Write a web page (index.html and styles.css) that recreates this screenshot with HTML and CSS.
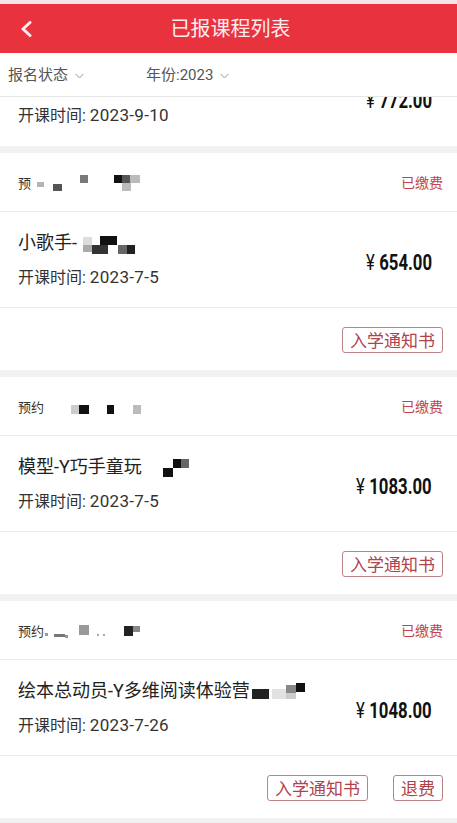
FILE: index.html
```html
<!DOCTYPE html>
<html lang="zh-CN">
<head>
    <meta charset="UTF-8">
    <meta name="viewport" content="width=device-width, initial-scale=1.0">
    <title>已报课程列表</title>
    <link rel="stylesheet" href="styles.css">
</head>
<body>
    <div class="status-strip"></div>
    <header class="topbar">
        <a class="back" href="#">
            <svg width="12" height="16" viewBox="0 0 12 16"><path d="M10 1.5 L3 8 L10 14.5" fill="none" stroke="#fdeced" stroke-width="3" stroke-linecap="round" stroke-linejoin="round"/></svg>
        </a>
        <h1 class="title">已报课程列表</h1>
        <span class="spacer"></span>
    </header>

    <div class="filters">
        <div class="filter filter-status"><span>报名状态</span><svg class="caret" width="9" height="6" viewBox="0 0 9 6"><path d="M0.5 0.8 L4.5 5 L8.5 0.8" fill="none" stroke="#9a9a9a" stroke-width="1"/></svg></div>
        <div class="filter"><span>年份:2023</span><svg class="caret" width="9" height="6" viewBox="0 0 9 6"><path d="M0.5 0.8 L4.5 5 L8.5 0.8" fill="none" stroke="#9a9a9a" stroke-width="1"/></svg></div>
    </div>

    <main class="list">
        <!-- first card is scrolled half out of view -->
        <section class="card card-first">
            <div class="card-head">
                <span class="org">预约</span>
                <span class="paid">已缴费</span>
            </div>
            <div class="card-body">
                <div class="info">
                    <div class="name">课程</div>
                    <div class="date">开课时间: <span class="day">2023-9-10</span></div>
                </div>
                <div class="price"><span class="yen">¥</span>772.00</div>
            </div>
        </section>

        <section class="card">
            <div class="card-head">
                <span class="org">预<svg class="mosaic mosaic-head" width="110" height="20" viewBox="0 0 110 20">
                    <rect x="5" y="10" width="7" height="5" fill="#b4b4b4"/>
                    <rect x="21" y="12" width="9" height="7" fill="#555"/>
                    <rect x="48" y="3" width="8" height="8" fill="#7a7a7a"/>
                    <rect x="82" y="3" width="8" height="8" fill="#111"/>
                    <rect x="90" y="3" width="8" height="8" fill="#555"/>
                    <rect x="98" y="3" width="10" height="8" fill="#bbb"/>
                    <rect x="90" y="11" width="9" height="8" fill="#bbb"/>
                </svg></span>
                <span class="paid">已缴费</span>
            </div>
            <div class="card-body">
                <div class="info">
                    <div class="name">小歌手-<svg class="mosaic mosaic-name" width="56" height="27" viewBox="0 0 56 27">
                        <rect x="2" y="7" width="9" height="8" fill="#ddd"/>
                        <rect x="2" y="15" width="9" height="7" fill="#aaa"/>
                        <rect x="11" y="15" width="16" height="9" fill="#333"/>
                        <rect x="19" y="6" width="17" height="9" fill="#111"/>
                        <rect x="37" y="15" width="9" height="9" fill="#666"/>
                        <rect x="46" y="15" width="8" height="9" fill="#222"/>
                    </svg></div>
                    <div class="date">开课时间: <span class="day">2023-7-5</span></div>
                </div>
                <div class="price"><span class="yen">¥</span>654.00</div>
            </div>
            <div class="card-foot">
                <button class="btn">入学通知书</button>
            </div>
        </section>

        <section class="card">
            <div class="card-head">
                <span class="org">预约<svg class="mosaic mosaic-head" width="100" height="20" viewBox="0 0 100 20">
                    <rect x="26" y="9" width="8" height="9" fill="#ccc"/>
                    <rect x="34" y="9" width="10" height="9" fill="#111"/>
                    <rect x="62" y="9" width="7" height="9" fill="#111"/>
                    <rect x="88" y="9" width="8" height="9" fill="#bbb"/>
                </svg></span>
                <span class="paid">已缴费</span>
            </div>
            <div class="card-body">
                <div class="info">
                    <div class="name">模型-Y巧手童玩<svg class="mosaic mosaic-name" width="50" height="25" viewBox="0 0 50 25">
                        <rect x="17" y="13" width="10" height="9" fill="#111"/>
                        <rect x="27" y="4" width="8" height="9" fill="#111"/>
                        <rect x="35" y="4" width="8" height="9" fill="#666"/>
                    </svg></div>
                    <div class="date">开课时间: <span class="day">2023-7-5</span></div>
                </div>
                <div class="price"><span class="yen">¥</span>1083.00</div>
            </div>
            <div class="card-foot">
                <button class="btn">入学通知书</button>
            </div>
        </section>

        <section class="card">
            <div class="card-head">
                <span class="org">预约<svg class="mosaic mosaic-head" width="100" height="20" viewBox="0 0 100 20">
                    <rect x="0" y="13" width="3" height="3" fill="#999"/>
                    <rect x="9" y="14" width="11" height="3" fill="#777"/>
                    <rect x="20" y="15" width="3" height="3" fill="#999"/>
                    <rect x="34" y="5" width="10" height="10" fill="#999"/>
                    <rect x="52" y="14" width="2" height="2" fill="#aaa"/>
                    <rect x="58" y="14" width="2" height="2" fill="#aaa"/>
                    <rect x="79" y="6" width="9" height="10" fill="#222"/>
                    <rect x="88" y="6" width="7" height="6" fill="#888"/>
                </svg></span>
                <span class="paid">已缴费</span>
            </div>
            <div class="card-body">
                <div class="info">
                    <div class="name">绘本总动员-Y多维阅读体验营<svg class="mosaic mosaic-tight" width="54" height="24" viewBox="0 0 54 24">
                        <rect x="0" y="10" width="17" height="10" fill="#222"/>
                        <rect x="20" y="10" width="14" height="10" fill="#e2e2e2"/>
                        <rect x="34" y="6" width="10" height="8" fill="#888"/>
                        <rect x="44" y="4" width="9" height="9" fill="#111"/>
                        <rect x="34" y="14" width="10" height="6" fill="#ccc"/>
                    </svg></div>
                    <div class="date">开课时间: <span class="day">2023-7-26</span></div>
                </div>
                <div class="price"><span class="yen">¥</span>1048.00</div>
            </div>
            <div class="card-foot">
                <button class="btn">入学通知书</button>
                <button class="btn">退费</button>
            </div>
        </section>
    </main>
</body>
</html>
```

FILE: styles.css
```css
body {
    margin: 0;
    padding: 0;
    background: #f2f2f2;
    color: #222;
    font-family: Roboto, "Noto Sans CJK SC", sans-serif;
    overflow: hidden;
}

.status-strip {
    height: 4px;
    background: #f7e4e6;
}

.topbar {
    height: 49px;
    background: #e8333f;
    display: grid;
    grid-template-columns: 60px 1fr 60px;
    align-items: center;
}

.back {
    display: flex;
    align-items: center;
    padding-left: 20px;
    height: 100%;
}

.title {
    margin: 0;
    text-align: center;
    color: #fdeced;
    font-size: 20px;
    font-weight: 400;
    line-height: 28px;
    padding-left: 4px;
}

.filters {
    height: 43px;
    background: #fff;
    border-bottom: 1px solid #e6e6e6;
    display: flex;
    align-items: center;
    padding-left: 8px;
}

.filter {
    font-size: 15px;
    color: #555;
    display: flex;
    align-items: center;
    line-height: 20px;
}

.filter-status {
    width: 138px;
}

.caret {
    margin-left: 7px;
    margin-top: 2px;
}

.list {
    overflow: hidden;
}

.card {
    background: #fff;
    margin-bottom: 7px;
}

.card-first {
    margin-top: -106px;
}

.card-head {
    height: 58px;
    padding: 0 14px 0 18px;
    display: flex;
    align-items: center;
    justify-content: space-between;
    border-bottom: 1px solid #ececec;
}

.org {
    font-size: 13px;
    color: #333;
    display: flex;
    align-items: center;
}

.paid {
    font-size: 14px;
    color: #c4434d;
}

.card-body {
    padding: 19px 25px 18px 18px;
    display: flex;
    align-items: center;
    justify-content: space-between;
    border-bottom: 1px solid #ececec;
}

.card-first .card-body {
    border-bottom: none;
    padding-bottom: 19px;
}

.name {
    height: 24px;
    font-size: 18px;
    line-height: 24px;
    color: #222;
    display: flex;
    align-items: center;
    white-space: nowrap;
}

.date {
    height: 22px;
    margin-top: 12px;
    font-size: 16px;
    line-height: 22px;
    color: #333;
    white-space: nowrap;
}

.day {
    font-size: 17px;
    line-height: 1;
    letter-spacing: 0.3px;
}

.mosaic {
    flex-shrink: 0;
}

.mosaic-head {
    margin-left: 1px;
}

.mosaic-name {
    margin-left: 4px;
}

.mosaic-tight {
    margin-left: 2px;
}

.price {
    font-family: Roboto, "Liberation Sans", sans-serif;
    font-weight: 700;
    font-size: 22px;
    color: #111;
    transform: scaleX(0.76);
    transform-origin: right center;
    margin-top: 4px;
    white-space: nowrap;
}

.yen {
    font-weight: 400;
    margin-right: 6px;
}

.card-foot {
    display: flex;
    justify-content: flex-end;
    gap: 25px;
    padding: 19px 14px 17px;
}

.btn {
    height: 26px;
    padding: 0 7px;
    background: #fff;
    border: 1px solid #b98388;
    border-radius: 3px;
    color: #b0424b;
    font-family: "Noto Sans CJK SC", sans-serif;
    font-size: 17px;
    line-height: 24px;
}
```
